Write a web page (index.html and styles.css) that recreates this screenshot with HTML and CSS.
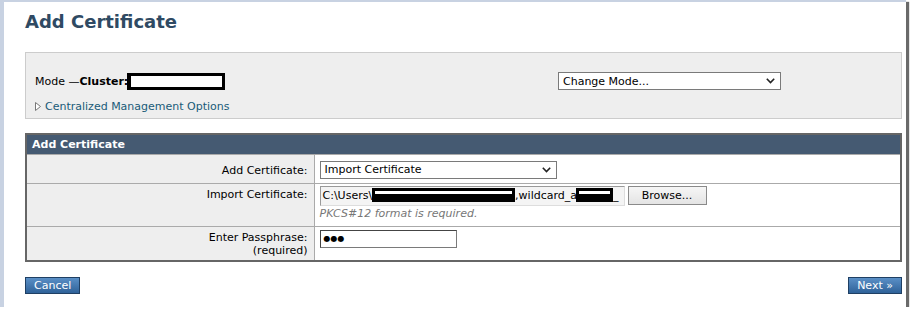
FILE: index.html
```html
<!DOCTYPE html>
<html lang="en">
<head>
    <meta charset="UTF-8">
    <title>Add Certificate</title>
    <link rel="stylesheet" href="styles.css">
</head>
<body>
    <div class="window">
        <h1 class="page-title">Add Certificate</h1>

        <div class="mode-box">
            <div class="mode-row">
                <div class="mode-text">Mode &mdash;<b>Cluster:</b><span class="redact-box"></span></div>
                <div class="select mode-select">
                    <span>Change Mode...</span>
                    <svg width="9" height="6" viewBox="0 0 9 6"><polyline points="0.8,0.8 4.5,4.6 8.2,0.8" fill="none" stroke="#222" stroke-width="1.6"/></svg>
                </div>
            </div>
            <div class="cm-link">
                <svg width="6" height="9" viewBox="0 0 6 9"><polygon points="0.5,0.5 5.5,4.5 0.5,8.5" fill="#fff" stroke="#777" stroke-width="1"/></svg>
                <a href="#">Centralized Management Options</a>
            </div>
        </div>

        <table class="form-table">
            <tr class="row-head">
                <th colspan="2">Add Certificate</th>
            </tr>
            <tr class="row-type">
                <td class="label">Add Certificate:</td>
                <td class="value">
                    <div class="select type-select">
                        <span>Import Certificate</span>
                        <svg width="9" height="6" viewBox="0 0 9 6"><polyline points="0.8,0.8 4.5,4.6 8.2,0.8" fill="none" stroke="#222" stroke-width="1.6"/></svg>
                    </div>
                </td>
            </tr>
            <tr class="row-file">
                <td class="label">Import Certificate:</td>
                <td class="value">
                    <div class="file-input">
                        <div class="file-path">C:\Users\<span class="redact redact-1"></span>,wildcard_a<span class="redact redact-2"></span>_</div>
                        <div class="browse-btn">Browse...</div>
                    </div>
                    <div class="hint">PKCS#12 format is required.</div>
                </td>
            </tr>
            <tr class="row-pass">
                <td class="label">Enter Passphrase:<br>(required)</td>
                <td class="value">
                    <div class="pass-input">&#9679;&#9679;&#9679;</div>
                </td>
            </tr>
        </table>

        <div class="actions">
            <button class="blue-btn">Cancel</button>
            <button class="blue-btn">Next &raquo;</button>
        </div>
    </div>
</body>
</html>
```

FILE: styles.css
```css
body {
    margin: 0;
    padding: 0;
    background-color: #ffffff;
    font-family: "DejaVu Sans", Verdana, sans-serif;
    font-size: 11px;
    line-height: 13px;
    color: #000;
}
.window {
    width: 906px;
    height: 307px;
    box-sizing: border-box;
    border-left: 4px solid #c8d2e2;
    border-top: 2px solid #c8d2e2;
    padding: 0 4px 0 21px;
    background-color: #fff;
    box-shadow: 3px 2px 1px #6a6a6a;
}
.page-title {
    margin: 9px 0 19px 0;
    font-size: 18px;
    line-height: 22px;
    color: #2f4a63;
}
.mode-box {
    height: 65px;
    border: 1px solid #cccccc;
    background-color: #eeeeee;
    padding: 0 0 0 9px;
}
.mode-row {
    display: grid;
    grid-template-columns: 523px auto;
    align-items: center;
    margin-top: 19px;
    height: 18px;
}
.mode-text {
    white-space: nowrap;
}
.redact-box {
    display: inline-block;
    vertical-align: -5px;
    width: 91px;
    height: 11px;
    margin-left: -1px;
    background: #fff;
    border: solid #000;
    border-width: 3px 3px 3px 4px;
}
.select {
    box-sizing: border-box;
    display: flex;
    align-items: center;
    justify-content: space-between;
    height: 18px;
    padding: 0 5px 0 4px;
    border: 1px solid #7a7a7a;
    background: #fff;
}
.mode-select {
    width: 223px;
}
.cm-link {
    display: flex;
    align-items: center;
    gap: 4px;
    margin-top: 10px;
}
.cm-link a {
    color: #195b78;
    text-decoration: none;
}
.form-table {
    width: 877px;
    margin-top: 14px;
    border-collapse: collapse;
    border: 2px solid #666666;
}
.form-table th {
    box-sizing: border-box;
    background-color: #455a72;
    color: #fff;
    text-align: left;
    font-weight: bold;
    height: 20px;
    padding: 0 5px;
}
.form-table td {
    box-sizing: border-box;
    border-top: 1px solid #aaaaaa;
    vertical-align: top;
    padding: 0;
}
.form-table td.label {
    width: 288px;
    text-align: right;
    background-color: #eeeeee;
    border-right: 1px solid #aaaaaa;
    padding-right: 6px;
}
.form-table td.value {
    padding-left: 5px;
}
.row-type td {
    height: 29px;
}
.row-type td.label {
    padding-top: 9px;
}
.row-type td.value {
    padding-top: 6px;
}
.type-select {
    width: 237px;
}
.row-file td {
    height: 43px;
}
.row-file td.label {
    padding-top: 4px;
}
.row-file td.value {
    padding-top: 2px;
}
.file-input {
    display: flex;
    align-items: center;
    gap: 3px;
}
.file-path {
    box-sizing: border-box;
    width: 305px;
    height: 20px;
    line-height: 18px;
    padding-left: 2px;
    border: 1px solid #9a9a9a;
    border-right-color: #dddddd;
    border-bottom-color: #dddddd;
    background-color: #f4f4f4;
    white-space: nowrap;
    overflow: hidden;
}
.redact {
    display: inline-block;
    vertical-align: -3px;
    box-sizing: border-box;
    height: 14px;
    background: #fff;
    border: solid #000;
    border-width: 3px 3px 8px 3px;
}
.redact-1 {
    width: 143px;
    margin-left: 0;
}
.redact-2 {
    width: 37px;
    margin-left: -1px;
}
.browse-btn {
    box-sizing: border-box;
    width: 79px;
    height: 19px;
    line-height: 17px;
    text-align: center;
    border: 1px solid #8a8a8a;
    background: linear-gradient(#f6f6f6, #e4e4e4);
}
.hint {
    margin-top: 1px;
    font-style: italic;
    color: #777777;
}
.row-pass td {
    height: 35px;
}
.row-pass td.label {
    padding-top: 4px;
}
.row-pass td.value {
    padding-top: 3px;
}
.pass-input {
    box-sizing: border-box;
    width: 137px;
    height: 18px;
    line-height: 16px;
    padding-left: 3px;
    font-size: 8px;
    border: 1px solid #7a7a7a;
    border-top-color: #444;
    border-left-color: #444;
    background: #fff;
}
.actions {
    display: flex;
    justify-content: space-between;
    margin-top: 15px;
}
.blue-btn {
    height: 17px;
    padding: 0 8px;
    font-family: "DejaVu Sans", Verdana, sans-serif;
    font-size: 11px;
    line-height: 15px;
    color: #fff;
    border: 1px solid #1f3f63;
    background: linear-gradient(#5a8fc6, #2f6299);
}
```
